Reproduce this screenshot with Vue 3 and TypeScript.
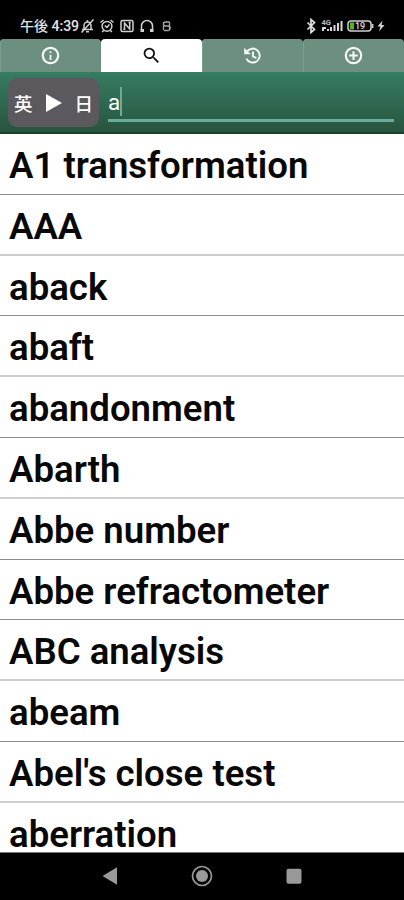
<script setup lang="ts">
import { ref } from 'vue'

interface Entry {
  text: string
  soft?: boolean
}

const words: Entry[] = [
  { text: 'A1 transformation' },
  { text: 'AAA', soft: true },
  { text: 'aback' },
  { text: 'abaft', soft: true },
  { text: 'abandonment' },
  { text: 'Abarth', soft: true },
  { text: 'Abbe number' },
  { text: 'Abbe refractometer' },
  { text: 'ABC analysis', soft: true },
  { text: 'abeam' },
  { text: "Abel's close test", soft: true },
  { text: 'aberration' },
]
const query = ref<string>('a')
</script>

<template>
  <div class="screen">
    <header class="status">
      <span class="clock">午後 4:39</span>
      <svg class="left-icons" viewBox="0 0 92 16" fill="none" stroke="#d0d0d0" stroke-width="1.5">
        <path d="M2 11.500h11M4 11V7.500a3.500 3.500 0 0 1 7 0V11M6 13.700h3M13.500 1.500L1.500 14.500M7.500 2v2" />
        <g>
          <circle cx="27" cy="8.300" r="4.900" />
          <path d="M20.500 4.500l3-2.500M33.500 4.500l-3-2.500M24.700 7.500l2.200 2 2.600-3M23.500 12.500l-1.300 1.500M30.500 12.500l1.300 1.500" />
        </g>
        <rect x="41" y="2.500" width="12" height="11" rx="1.500" />
        <path d="M44.500 11.500V5l5.200 6V4.500M43.300 11.300h2M48.500 4.600h2.200" />
        <path d="M61.500 12.500V8a5.500 5.500 0 0 1 11 0v4.500" />
        <path d="M60.500 12.500h3.500M70 12.500h3.500" stroke-width="2.800" />
        <path d="M89.500 4h-4a2 2 0 0 0 0 4h2.500a2.200 2.200 0 0 1 0 4.500h-4M83.500 4v8M89.500 4v8" stroke="#a5a5a5" stroke-width="1.300" />
      </svg>
      <svg class="right-icons" viewBox="0 0 82 16">
        <path d="M3.500 4.500l7 7-3.500 3V1.500l3.500 3-7 7" fill="none" stroke="#e0e0e0" stroke-width="1.700" />
        <text x="17.500" y="7" class="network">4G</text>
        <path d="M18 9h4v2h-2v2h-2zM23 13v-2h2v2zM26 13V9h2v4zM29.500 13V7h2v6zM33 13V5h2v8zM36.500 13V3h2v10z" fill="#d8d8d8" />
        <rect x="44" y="3" width="23" height="10" rx="3" fill="#050505" stroke="#d0d0d0" stroke-width="1.500" />
        <path d="M46 4.500h4v7h-4z" fill="#55b51f" />
        <text x="51" y="11.300" class="charge">19</text>
        <path d="M68.500 6v4" stroke="#d0d0d0" stroke-width="1.800" />
        <path d="M78.500 2.500l-5 6h3l-1.500 5 5.500-6.500h-3z" fill="#d8d8d8" />
      </svg>
    </header>

    <nav class="tabs">
      <button class="tab" aria-label="Info">
        <svg viewBox="0 0 24 24"><path d="M11 7h2v2h-2zm0 4h2v6h-2zm1-9C6.480 2 2 6.480 2 12s4.480 10 10 10 10-4.480 10-10S17.520 2 12 2zm0 17.500a7.500 7.500 0 1 1 0-15 7.500 7.500 0 0 1 0 15z" /></svg>
      </button>
      <button class="tab active" aria-label="Search">
        <svg viewBox="0 0 24 24"><path d="M15.500 14h-.79l-.28-.27A6.470 6.470 0 0 0 16 9.500 6.500 6.500 0 1 0 9.500 16c1.610 0 3.090-.59 4.230-1.570l.27.28v.79l5 4.990L20.490 19l-4.990-5zm-6 0C7.010 14 5 11.990 5 9.500S7.010 5 9.500 5 14 7.010 14 9.500 11.990 14 9.500 14z" /></svg>
      </button>
      <button class="tab" aria-label="History">
        <svg viewBox="0 0 24 24">
          <path d="M5.500 7.800A8 8 0 1 1 5 15.500M12.500 7.500V13l4 2" class="line" />
          <path d="M2.500 3v7.500H10z" />
        </svg>
      </button>
      <button class="tab" aria-label="Add">
        <svg viewBox="0 0 24 24"><path d="M13.200 7h-2.400v3.800H7v2.400h3.800V17h2.400v-3.800H17v-2.400h-3.800zM12 2a10 10 0 1 0 0 20 10 10 0 0 0 0-20zm0 17.500a7.500 7.500 0 1 1 0-15 7.500 7.500 0 0 1 0 15z" /></svg>
      </button>
    </nav>

    <section class="search">
      <button class="direction">
        <span>英</span>
        <svg viewBox="0 0 16 18"><path d="M0 0l16 9-16 9z" fill="#fff" /></svg>
        <span>日</span>
      </button>
      <div class="field"><span>{{ query }}</span><i class="caret"></i></div>
    </section>

    <ul class="words">
      <li v-for="word in words" :key="word.text" :class="{ soft: word.soft }">{{ word.text }}</li>
    </ul>

    <footer class="navbar">
      <svg viewBox="0 0 24 24"><path d="M4.500 12L19 3.300v17.400z" fill="#999" /></svg>
      <svg viewBox="0 0 24 24"><circle cx="12" cy="12" r="9.500" fill="none" stroke="#999" stroke-width="1.700" /><circle cx="12" cy="12" r="6" fill="#999" /></svg>
      <svg viewBox="0 0 24 24"><rect x="4.500" y="4.700" width="15" height="15" rx="2" fill="#999" /></svg>
    </footer>
  </div>
</template>

<style>
body {
  background: #000;
}
</style>

<style scoped>
.screen {
  display: flex;
  flex-direction: column;
  width: 404px;
  height: 900px;
  overflow: hidden;
  background: #000;
  font-family: Roboto, 'Noto Sans CJK JP', sans-serif;
}
.status {
  display: flex;
  flex: none;
  align-items: center;
  box-sizing: border-box;
  height: 39px;
  padding: 12px 18px 0 20px;
  color: #e4e4e4;
}
.clock {
  width: 60px;
  font-size: 14px;
  font-weight: 500;
  line-height: 16px;
  white-space: nowrap;
}
.left-icons {
  width: 92px;
  height: 16px;
}
.right-icons {
  width: 82px;
  height: 16px;
  margin-left: auto;
}
.network {
  fill: #bbb;
  font-size: 7.5px;
  font-weight: 700;
}
.charge {
  fill: #ddd;
  font-size: 9px;
  font-weight: 500;
}
.tabs {
  display: grid;
  flex: none;
  grid-template-columns: repeat(4, 1fr);
  height: 33px;
  background: linear-gradient(#000 50%, #357b60 50%);
}
.tab {
  display: flex;
  align-items: center;
  justify-content: center;
  height: 33px;
  padding: 0;
  border: 0;
  border-radius: 4px 4px 0 0;
  background: #6c8f80;
  box-shadow: inset 1px 0 #7b9e90;
}
.tab svg {
  width: 21px;
  height: 21px;
  fill: #f4f8f6;
}
.tab.active {
  background: #fff;
  box-shadow: none;
}
.tab.active svg {
  fill: #111;
}
.tab .line {
  fill: none;
  stroke: #f4f8f6;
  stroke-width: 2.3;
}
.search {
  display: flex;
  flex: none;
  gap: 9px;
  box-sizing: border-box;
  height: 62px;
  padding: 6px 10px 0 8px;
  border-bottom: 2px solid #173f30;
  background: linear-gradient(#367d61, #28543f);
}
.direction {
  display: flex;
  align-items: center;
  justify-content: space-between;
  box-sizing: border-box;
  width: 91px;
  height: 49px;
  padding: 0 6px;
  border: 0;
  border-radius: 9px;
  background: #5b595e;
  color: #fff;
  font: 500 18.5px/30px 'Noto Sans CJK JP', sans-serif;
}
.direction svg {
  width: 16px;
  height: 18px;
}
.field {
  display: flex;
  flex: 1;
  align-items: center;
  box-sizing: border-box;
  height: 44px;
  padding-top: 6px;
  border-bottom: 3px solid #67ae9c;
  color: #fff;
  font-size: 22.5px;
}
.caret {
  width: 2px;
  height: 29px;
  background: #67ae9c;
}
.words {
  flex: 1;
  min-height: 0;
  margin: 0;
  padding: 0;
  overflow: hidden;
  background: #fff;
  list-style: none;
}
.words li {
  box-sizing: border-box;
  height: 60.8px;
  padding: 1px 9px 0;
  border-bottom: 1px solid #8c8c8c;
  color: #080808;
  font-size: 36.6px;
  font-weight: 600;
  line-height: 61px;
  white-space: nowrap;
}
.words li.soft {
  border-bottom: 2px solid #cdcdcd;
}
.navbar {
  display: flex;
  flex: none;
  justify-content: center;
  gap: 68px;
  box-sizing: border-box;
  height: 48px;
  padding-top: 11px;
  border-top: 1px solid #777;
}
.navbar svg {
  width: 24px;
  height: 24px;
}
</style>
